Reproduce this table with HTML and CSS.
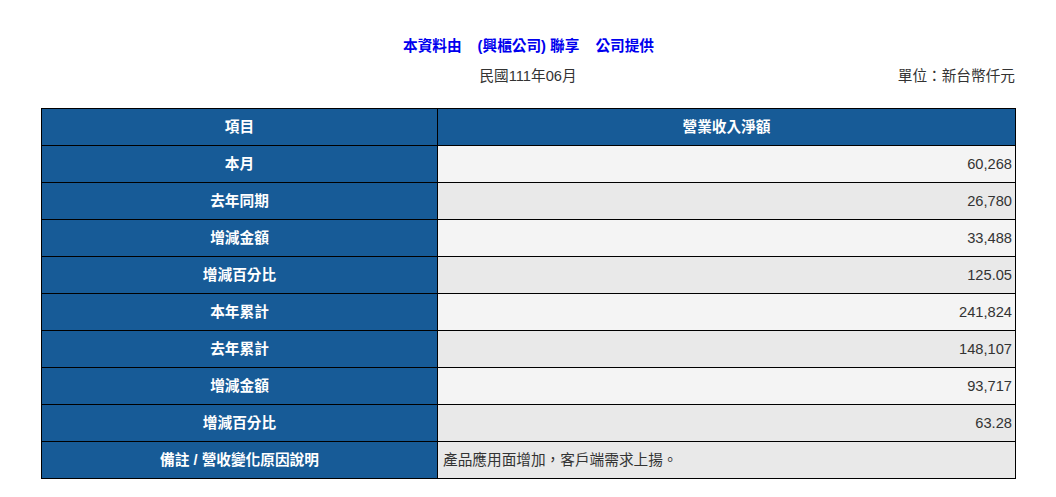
FILE: index.html
```html
<!DOCTYPE html>
<html lang="zh-Hant">
<head>
<meta charset="utf-8">
<link rel="stylesheet" href="styles.css">
</head>
<body>
<div class="page">
  <div class="title">本資料由<span class="gap"></span>(興櫃公司) 聯享<span class="gap"></span>公司提供</div>
  <div class="subhead">
    <div class="side"></div>
    <div class="period">民國111年06月</div>
    <div class="side unit">單位：新台幣仟元</div>
  </div>
  <table class="data">
    <thead>
      <tr><th class="label">項目</th><th>營業收入淨額</th></tr>
    </thead>
    <tbody>
      <tr class="odd"><th class="label">本月</th><td class="num">60,268</td></tr>
      <tr class="even"><th class="label">去年同期</th><td class="num">26,780</td></tr>
      <tr class="odd"><th class="label">增減金額</th><td class="num">33,488</td></tr>
      <tr class="even"><th class="label">增減百分比</th><td class="num">125.05</td></tr>
      <tr class="odd"><th class="label">本年累計</th><td class="num">241,824</td></tr>
      <tr class="even"><th class="label">去年累計</th><td class="num">148,107</td></tr>
      <tr class="odd"><th class="label">增減金額</th><td class="num">93,717</td></tr>
      <tr class="even"><th class="label">增減百分比</th><td class="num">63.28</td></tr>
      <tr class="even"><th class="label">備註 / 營收變化原因說明</th><td class="note">產品應用面增加，客戶端需求上揚。</td></tr>
    </tbody>
  </table>
</div>
</body>
</html>
```
FILE: styles.css
```css
html, body {
  margin: 0;
  padding: 0;
  background: #fff;
}
body {
  font-family: "Liberation Sans", Arial, "Noto Sans CJK TC", sans-serif;
  font-size: 11pt;
  color: #333;
}
.page {
  padding: 37px 40px 0 41px;
}
.title {
  text-align: center;
  color: #0000ee;
  font-weight: bold;
  line-height: 18px;
}
.title .gap {
  display: inline-block;
  width: 16px;
}
.subhead {
  display: flex;
  align-items: center;
  margin-top: 12px;
  line-height: 18px;
}
.side {
  flex: 1;
}
.period {
  text-align: center;
}
.unit {
  text-align: right;
  padding-right: 1px;
}
.data {
  margin-top: 23px;
  width: 100%;
  border-collapse: collapse;
  border: 1px solid #000;
}
.data th, .data td {
  border: 1px solid #000;
  height: 37px;
  padding: 0 3px;
  box-sizing: border-box;
  line-height: 18px;
}
.data th {
  background: #175b97;
  color: #fff;
  font-weight: bold;
  text-align: center;
}
.data th.label {
  width: 396px;
}
.data tr.odd td { background: #f4f4f4; }
.data tr.even td { background: #e9e9e9; }
.data td.num { text-align: right; }
.data td.note { text-align: left; padding-left: 5px; }
```
